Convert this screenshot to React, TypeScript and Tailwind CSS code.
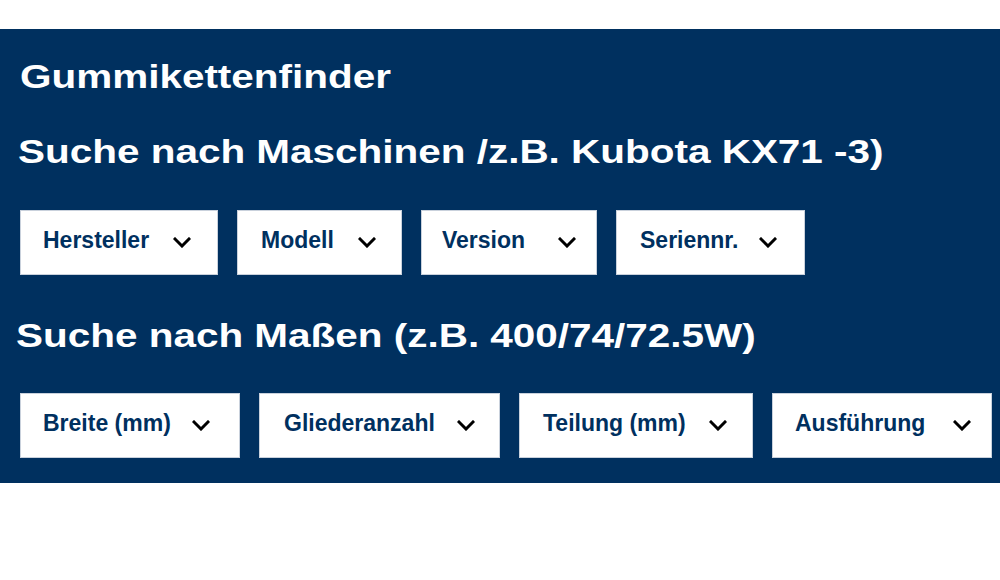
import { ReactNode } from "react";

type Filter = {
  label: string;
  width: string;
  pad: string;
};

const machineFilters: Filter[] = [
  { label: "Hersteller", width: "w-[198px]", pad: "pl-[22px] pr-[26px]" },
  { label: "Modell", width: "w-[165px]", pad: "pl-[23px] pr-[25px]" },
  { label: "Version", width: "w-[176px]", pad: "pl-[20px] pr-[20px]" },
  { label: "Seriennr.", width: "w-[189px]", pad: "pl-[23px] pr-[27px]" },
];

const sizeFilters: Filter[] = [
  { label: "Breite (mm)", width: "w-[220px]", pad: "pl-[22px] pr-[29px]" },
  { label: "Gliederanzahl", width: "w-[241px]", pad: "pl-[24px] pr-[24px]" },
  { label: "Teilung (mm)", width: "w-[234px]", pad: "pl-[23px] pr-[25px]" },
  { label: "Ausführung", width: "w-[220px]", pad: "pl-[22px] pr-[20px]" },
];

function Chevron() {
  return (
    <svg width="18" height="11" viewBox="0 0 18 11" aria-hidden="true">
      <path
        d="M2 2 L9 9 L16 2"
        fill="none"
        stroke="#000"
        strokeWidth="3"
        strokeLinecap="square"
      />
    </svg>
  );
}

function Select({ f }: { f: Filter }) {
  return (
    <button
      type="button"
      className={
        "flex h-[65px] shrink-0 items-center justify-between border border-[#c9d1dc] bg-white text-[23px] font-bold text-[#00305f] " +
        f.width +
        " " +
        f.pad
      }
    >
      <span className="-mt-[4px] leading-none">{f.label}</span>
      <Chevron />
    </button>
  );
}

// headings in the source are drawn wide, so stretch them horizontally
function Heading({ children, className }: { children: ReactNode; className: string }) {
  return (
    <h2
      className={
        "origin-left scale-x-[1.19] text-[34px] font-bold leading-[34px] text-white whitespace-nowrap " +
        className
      }
    >
      {children}
    </h2>
  );
}

export default function App() {
  return (
    <div
      className="min-h-[580px] w-[1000px] bg-white pt-[29px]"
      style={{ fontFamily: '"Liberation Sans", Arial, sans-serif' }}
    >
      <section className="flex flex-col overflow-hidden bg-[#00305f] pb-[25px] pl-5 pt-[30px]">
        <Heading className="">Gummikettenfinder</Heading>
        <Heading className="-ml-[2px] mt-[41px]">
          Suche nach Maschinen /z.B. Kubota KX71 -3)
        </Heading>
        <div className="mt-[42px] flex gap-[19px]">
          {machineFilters.map((f) => (
            <Select key={f.label} f={f} />
          ))}
        </div>
        <Heading className="-ml-[4px] mt-[43px]">
          Suche nach Maßen (z.B. 400/74/72.5W)
        </Heading>
        <div className="mt-[41px] flex gap-[19px]">
          {sizeFilters.map((f) => (
            <Select key={f.label} f={f} />
          ))}
        </div>
      </section>
    </div>
  );
}
